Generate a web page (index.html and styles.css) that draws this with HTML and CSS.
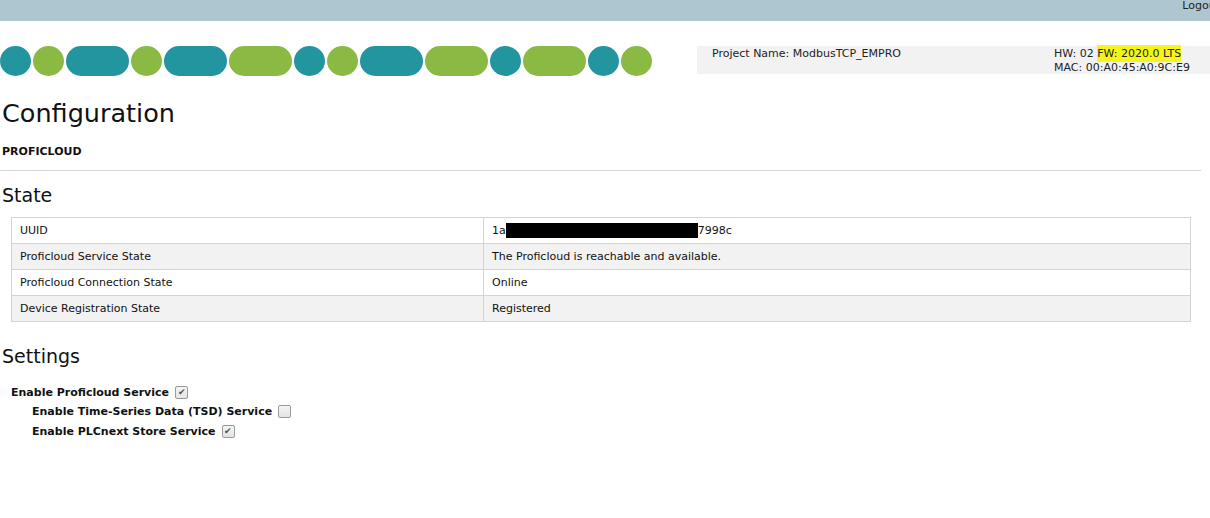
FILE: index.html
```html
<!DOCTYPE html>
<html lang="en">
<head>
    <meta charset="UTF-8" />
    <title>Configuration - Proficloud</title>
    <link rel="stylesheet" href="styles.css">
</head>
<body>
    <header class="topbar">
        <a class="logout" href="#">Logout</a>
    </header>

    <div class="banner">
        <div class="pills" aria-hidden="true">
            <span class="pill teal"></span>
            <span class="pill green"></span>
            <span class="pill teal long"></span>
            <span class="pill green"></span>
            <span class="pill teal long"></span>
            <span class="pill green long"></span>
            <span class="pill teal"></span>
            <span class="pill green"></span>
            <span class="pill teal long"></span>
            <span class="pill green long"></span>
            <span class="pill teal"></span>
            <span class="pill green long"></span>
            <span class="pill teal"></span>
            <span class="pill green"></span>
        </div>
        <div class="device-info">
            <div class="project">Project Name: ModbusTCP_EMPRO</div>
            <div class="hw">
                <div>HW: 02 <span class="mark">FW: 2020.0 LTS</span></div>
                <div>MAC: 00:A0:45:A0:9C:E9</div>
            </div>
        </div>
    </div>

    <main class="content">
        <h1>Configuration</h1>
        <div class="subtitle">PROFICLOUD</div>
        <hr class="divider">

        <h2>State</h2>
        <table class="state-table">
            <tr>
                <td class="key">UUID</td>
                <td>1a<span class="redact"></span>7998c</td>
            </tr>
            <tr>
                <td class="key">Proficloud Service State</td>
                <td>The Proficloud is reachable and available.</td>
            </tr>
            <tr>
                <td class="key">Proficloud Connection State</td>
                <td>Online</td>
            </tr>
            <tr>
                <td class="key">Device Registration State</td>
                <td>Registered</td>
            </tr>
        </table>

        <h2 class="settings-title">Settings</h2>
        <div class="settings">
            <label class="option">Enable Proficloud Service <input type="checkbox" checked></label>
            <label class="option sub">Enable Time-Series Data (TSD) Service <input type="checkbox"></label>
            <label class="option sub">Enable PLCnext Store Service <input type="checkbox" checked></label>
        </div>
    </main>
</body>
</html>
```

FILE: styles.css
```css
/* Reset */
*, *::before, *::after {
    box-sizing: border-box;
}

html, body {
    overflow: hidden;
}

body {
    margin: 0;
    font-family: 'DejaVu Sans', Verdana, sans-serif;
    font-size: 11px;
    color: #111;
    background: #fff;
}

.topbar {
    height: 21px;
    background: #aec6cf;
    display: flex;
    justify-content: flex-end;
}

.logout {
    color: #222;
    text-decoration: none;
    font-size: 11px;
    line-height: 11px;
    margin-right: -10px;
}

.banner {
    display: flex;
    align-items: flex-start;
    margin-top: 25px;
}

.pills {
    display: flex;
    gap: 2px;
}

.pill {
    display: block;
    width: 31px;
    height: 30px;
    border-radius: 50%;
}

.pill.long {
    width: 63px;
    border-radius: 15px / 15px;
}

.teal {
    background: #22959e;
}

.green {
    background: #8aba44;
}

.device-info {
    margin-left: auto;
    width: 513px;
    height: 28px;
    background: #f2f2f2;
    display: flex;
    padding: 1px 0 0 15px;
    color: #222;
    line-height: 14px;
}

.project {
    width: 342px;
}

.mark {
    background: #f5f51a;
    padding: 2px 0;
}

.content {
    padding: 0 9px 0 2px;
}

h1 {
    font-weight: normal;
    font-size: 25.5px;
    margin: 21px 0 0;
    line-height: 32px;
}

.subtitle {
    font-weight: bold;
    font-size: 11px;
    margin-top: 16px;
}

.divider {
    border: none;
    border-top: 1px solid #d6d6d6;
    margin: 12px 0 0 -2px;
}

h2 {
    font-weight: normal;
    font-size: 19px;
    margin: 12px 0 0;
    line-height: 24px;
}

.state-table {
    margin: 10px 0 0 9px;
    width: 1180px;
    border-collapse: collapse;
    font-size: 11px;
}

.state-table td {
    border: 1px solid #d4d4d4;
    height: 26px;
    padding: 0 8px;
}

.state-table td.key {
    width: 472px;
}

.state-table tr:nth-child(even) td {
    background: #f2f2f2;
}

.redact {
    display: inline-block;
    width: 192px;
    height: 15px;
    background: #000;
    vertical-align: middle;
}

.settings-title {
    margin-top: 22px;
}

.settings {
    margin: 16px 0 0 9px;
    display: flex;
    flex-direction: column;
    gap: 3.5px;
}

.option {
    font-weight: bold;
    font-size: 11px;
    display: flex;
    align-items: center;
    gap: 6px;
    height: 16px;
}

.option.sub {
    padding-left: 21px;
}

.option input {
    appearance: none;
    -webkit-appearance: none;
    margin: 0;
    width: 13px;
    height: 13px;
    border: 1px solid #9a9a9a;
    border-radius: 2px;
    background: linear-gradient(#f4f4f4, #e4e4e4);
    display: flex;
    align-items: center;
    justify-content: center;
}

.option input:checked::after {
    content: "\2714";
    font-size: 9px;
    line-height: 9px;
    color: #555;
}
```
